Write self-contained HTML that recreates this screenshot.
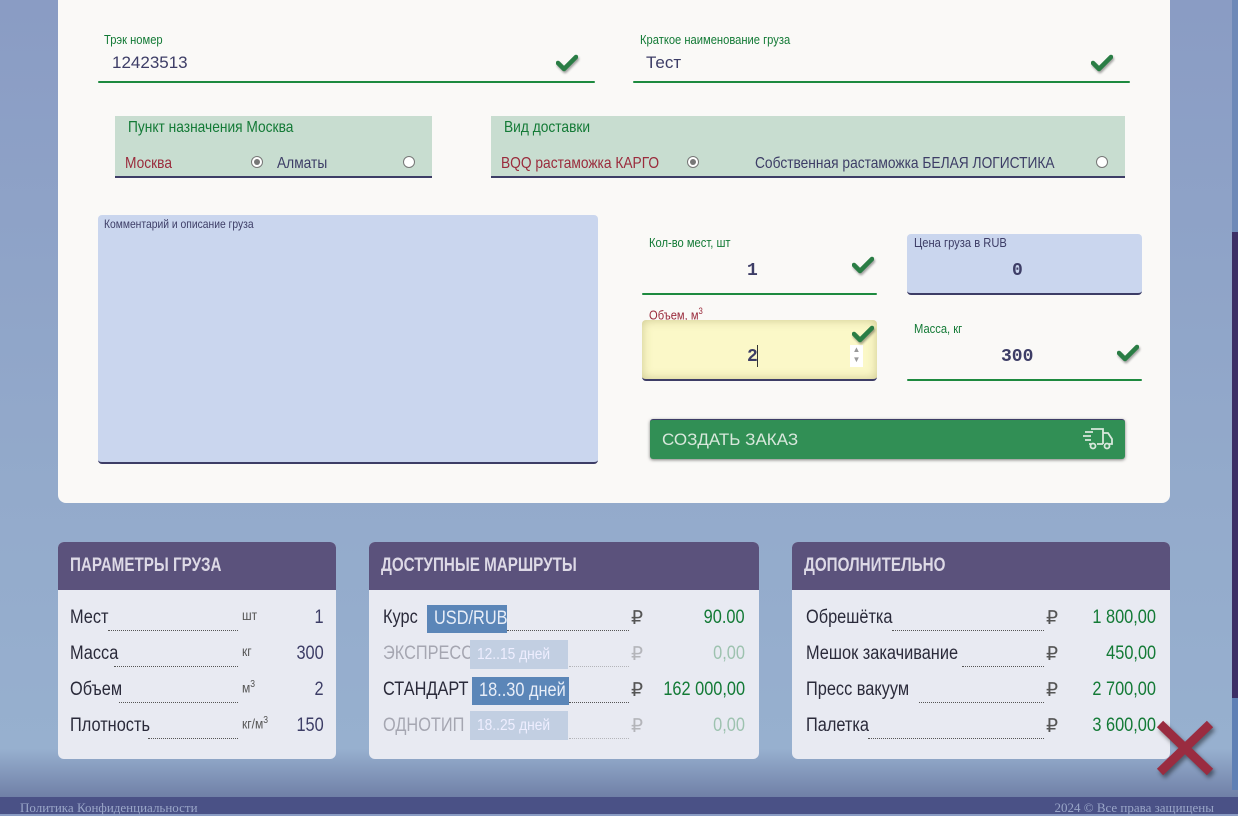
<!DOCTYPE html>
<html><head><meta charset="utf-8"><style>
*{margin:0;padding:0;box-sizing:border-box}
body{width:1238px;height:814px;overflow:hidden;position:relative;background:linear-gradient(180deg,#8a9cc4 0%,#93aacb 60%,#97b0cf 92%,#6f7fa6 98%);font-family:"Liberation Sans",sans-serif}
.a{position:absolute}
.n{transform:scaleX(.86);transform-origin:left center}
.nr{transform:scaleX(.86);transform-origin:right center}
.card{left:58px;top:0;width:1112px;height:503px;background:#faf9f7;border-radius:0 0 8px 8px}
.lbl{font-size:13px;color:#137a36;white-space:nowrap}
.ul{height:2px;background:#1d8a3f;border-radius:2px}
.chk{width:22px;height:18px}
.val{font-family:"Liberation Sans",sans-serif;font-size:17px;color:#3d3d66}
.mono{font-family:"Liberation Mono",monospace;font-weight:bold;font-size:18px;color:#3d3d66}
.gbox{background:#c8ddd0;border-bottom:2px solid #3d3d66}
.radio{width:12px;height:12px;border-radius:50%;background:#fff;border:1px solid #777}
.radio.on::after{content:"";position:absolute;left:2px;top:2px;width:6px;height:6px;border-radius:50%;background:#777}
.t16{font-size:16px;white-space:nowrap}
.bc{top:542px;height:217px;background:#e8eaf2;border-radius:6px;overflow:hidden}
.bh{height:48px;background:#5b527c;color:#ddd9e6;font-weight:bold;font-size:19px;padding:13px 12px;white-space:nowrap}
.bh span{display:inline-block;transform:scaleX(.8);transform-origin:left}
.row{position:absolute;left:0;right:0;height:30px;font-size:19px;color:#2a2a3a;white-space:nowrap}
.row>span{top:2px}
.dots{position:absolute;border-bottom:1px dotted #555;height:1px}
.g{color:#137a36}
.faded{opacity:.35}
.tag{position:absolute;background:#5b86b8;color:#e8eef8;padding:0 7px;height:28px;line-height:28px;white-space:nowrap}
.tag.f{background:#c2cfe2;color:#eef;}
.tag i{font-style:normal;display:inline-block;transform:scaleX(.86);transform-origin:left}
</style></head><body>
<div class="a card"></div>
<div class="a" style="left:1232px;top:0;width:6px;height:232px;background:#6e89b8"></div>
<div class="a" style="left:1232px;top:232px;width:6px;height:466px;background:#3c2f66"></div>
<div class="a" style="left:1232px;top:698px;width:6px;height:92px;background:#5f80b5"></div>

<svg width="0" height="0" style="position:absolute"><defs><symbol id="ck" viewBox="0 0 22 18"><path d="M2 9 L8 15 L20 3" stroke="#2a7d45" stroke-width="4.5" fill="none" stroke-linecap="round" stroke-linejoin="round"/></symbol></defs></svg>

<div class="a lbl n" style="left:104px;top:32px">Трэк номер</div>
<div class="a val" style="left:112px;top:53px">12423513</div>
<svg class="a chk" style="left:556px;top:54px;filter:drop-shadow(1px 2px 1px rgba(0,0,0,.35))"><use href="#ck"/></svg>
<div class="a ul" style="left:98px;top:81px;width:497px"></div>

<div class="a lbl n" style="left:640px;top:32px">Краткое наименование груза</div>
<div class="a val" style="left:646px;top:53px">Тест</div>
<svg class="a chk" style="left:1091px;top:54px;filter:drop-shadow(1px 2px 1px rgba(0,0,0,.35))"><use href="#ck"/></svg>
<div class="a ul" style="left:633px;top:81px;width:497px"></div>

<div class="a gbox" style="left:115px;top:116px;width:317px;height:62px"></div>
<div class="a t16 n" style="left:128px;top:119px;color:#137a36">Пункт назначения Москва</div>
<div class="a t16 n" style="left:125px;top:155px;color:#9a2b3c">Москва</div>
<div class="a radio on" style="left:251px;top:156px"></div>
<div class="a t16 n" style="left:277px;top:155px;color:#3d3d66">Алматы</div>
<div class="a radio" style="left:403px;top:156px"></div>

<div class="a gbox" style="left:491px;top:116px;width:634px;height:62px"></div>
<div class="a t16 n" style="left:504px;top:119px;color:#137a36">Вид доставки</div>
<div class="a t16 n" style="left:501px;top:155px;color:#9a2b3c">BQQ растаможка КАРГО</div>
<div class="a radio on" style="left:687px;top:156px"></div>
<div class="a t16 n" style="left:755px;top:155px;color:#3d3d66">Собственная растаможка БЕЛАЯ ЛОГИСТИКА</div>
<div class="a radio" style="left:1096px;top:156px"></div>

<div class="a" style="left:98px;top:215px;width:500px;height:249px;background:#cad6ee;border-radius:4px;border-bottom:2px solid #3d3d66"></div>
<div class="a n" style="left:104px;top:217px;font-size:12px;color:#3d3d66;white-space:nowrap">Комментарий и описание груза</div>

<div class="a lbl n" style="left:649px;top:235px">Кол-во мест, шт</div>
<div class="a mono" style="left:747px;top:261px">1</div>
<svg class="a chk" style="left:852px;top:256px;filter:drop-shadow(1px 2px 1px rgba(0,0,0,.35))"><use href="#ck"/></svg>
<div class="a ul" style="left:642px;top:293px;width:235px"></div>

<div class="a" style="left:907px;top:234px;width:235px;height:61px;background:#cad6ee;border-radius:4px;border-bottom:2px solid #3d3d66"></div>
<div class="a n" style="left:914px;top:235px;font-size:13px;color:#3d3d66;white-space:nowrap">Цена груза в RUB</div>
<div class="a mono" style="left:1012px;top:261px">0</div>

<div class="a n" style="left:649px;top:306px;font-size:13px;color:#9a2b3c;white-space:nowrap">Объем, м<sup style="font-size:9px">3</sup></div>
<div class="a" style="left:642px;top:320px;width:235px;height:61px;background:#fbf8c8;border-radius:4px;border-bottom:2px solid #3d3d66;box-shadow:inset 0 0 10px rgba(120,110,40,.35)"></div>
<div class="a mono" style="left:747px;top:347px">2</div>
<div class="a" style="left:757px;top:345px;width:1px;height:22px;background:#333"></div>
<div class="a" style="left:850px;top:345px;width:13px;height:22px;background:#fff;font-size:8px;color:#999;text-align:center;line-height:10px">▲<br>▼</div>
<svg class="a chk" style="left:852px;top:325px;filter:drop-shadow(1px 2px 1px rgba(0,0,0,.35))"><use href="#ck"/></svg>

<div class="a lbl n" style="left:914px;top:321px">Масса, кг</div>
<div class="a mono" style="left:1001px;top:347px">300</div>
<svg class="a chk" style="left:1117px;top:344px;filter:drop-shadow(1px 2px 1px rgba(0,0,0,.35))"><use href="#ck"/></svg>
<div class="a ul" style="left:907px;top:379px;width:235px"></div>

<div class="a" style="left:650px;top:419px;width:475px;height:40px;background:#318f55;border-radius:3px;box-shadow:0 1px 3px rgba(0,0,0,.5);border-top:1px solid #3d3d66"></div>
<div class="a" style="left:662px;top:430px;font-size:17px;color:#d8e8dc">СОЗДАТЬ ЗАКАЗ</div>
<svg class="a" style="left:1082px;top:426px" width="32" height="26" viewBox="0 0 32 26" fill="none" stroke="#d8e8dc" stroke-width="1.8"><path d="M9 3h12v15M21 7h5l4 6v5h-3M21 18h-6M9 18h-2"/><path d="M3 6h8M1 10h8M3 14h6"/><circle cx="11" cy="20" r="2.5"/><circle cx="25" cy="20" r="2.5"/></svg>

<div class="a bc" style="left:58px;width:278px">
<div class="bh"><span>ПАРАМЕТРЫ ГРУЗА</span></div>
<div class="row" style="top:63px"><span class="a n" style="left:12px">Мест</span><div class="dots" style="left:50px;width:130px;top:25px"></div><span class="a n" style="left:184px;font-size:14px;color:#555">шт</span><span class="a nr" style="right:12px;color:#3d3d66">1</span></div>
<div class="row" style="top:99px"><span class="a n" style="left:12px">Масса</span><div class="dots" style="left:56px;width:124px;top:25px"></div><span class="a n" style="left:184px;font-size:14px;color:#555">кг</span><span class="a nr" style="right:12px;color:#3d3d66">300</span></div>
<div class="row" style="top:135px"><span class="a n" style="left:12px">Объем</span><div class="dots" style="left:61px;width:119px;top:25px"></div><span class="a n" style="left:184px;font-size:14px;color:#555">м<sup style="font-size:10px">3</sup></span><span class="a nr" style="right:12px;color:#3d3d66">2</span></div>
<div class="row" style="top:171px"><span class="a n" style="left:12px">Плотность</span><div class="dots" style="left:90px;width:90px;top:25px"></div><span class="a n" style="left:184px;font-size:14px;color:#555">кг/м<sup style="font-size:10px">3</sup></span><span class="a nr" style="right:12px;color:#3d3d66">150</span></div>
</div>

<div class="a bc" style="left:369px;width:390px">
<div class="bh"><span>ДОСТУПНЫЕ МАРШРУТЫ</span></div>
<div class="row" style="top:63px"><span class="a n" style="left:14px">Курс</span><span class="tag" style="left:58px;top:0;width:80px"><i>USD/RUB</i></span><div class="dots" style="left:138px;width:122px;top:25px"></div><span class="a" style="left:262px;color:#555">₽</span><span class="a g nr" style="right:14px">90.00</span></div>
<div class="row faded" style="top:99px"><span class="a n" style="left:14px">ЭКСПРЕСС</span><div class="dots" style="left:200px;width:60px;top:25px"></div><span class="a" style="left:262px;color:#555">₽</span><span class="a g nr" style="right:14px">0,00</span></div>
<span class="a tag f" style="left:101px;top:98px;height:29px;line-height:29px;width:98px"><i>12..15 дней</i></span>
<div class="row" style="top:135px"><span class="a n" style="left:14px">СТАНДАРТ</span><span class="tag" style="left:103px;top:0;width:97px"><i>18..30 дней</i></span><div class="dots" style="left:200px;width:60px;top:25px"></div><span class="a" style="left:262px;color:#555">₽</span><span class="a g nr" style="right:14px">162 000,00</span></div>
<div class="row faded" style="top:171px"><span class="a n" style="left:14px">ОДНОТИП</span><div class="dots" style="left:200px;width:60px;top:25px"></div><span class="a" style="left:262px;color:#555">₽</span><span class="a g nr" style="right:14px">0,00</span></div>
<span class="a tag f" style="left:101px;top:169px;height:29px;line-height:29px;width:98px"><i>18..25 дней</i></span>
</div>

<div class="a bc" style="left:792px;width:378px">
<div class="bh"><span>ДОПОЛНИТЕЛЬНО</span></div>
<div class="row" style="top:63px"><span class="a n" style="left:14px">Обрешётка</span><div class="dots" style="left:100px;width:152px;top:25px"></div><span class="a" style="left:254px;color:#555">₽</span><span class="a g nr" style="right:14px">1 800,00</span></div>
<div class="row" style="top:99px"><span class="a n" style="left:14px">Мешок закачивание</span><div class="dots" style="left:170px;width:82px;top:25px"></div><span class="a" style="left:254px;color:#555">₽</span><span class="a g nr" style="right:14px">450,00</span></div>
<div class="row" style="top:135px"><span class="a n" style="left:14px">Пресс вакуум</span><div class="dots" style="left:127px;width:125px;top:25px"></div><span class="a" style="left:254px;color:#555">₽</span><span class="a g nr" style="right:14px">2 700,00</span></div>
<div class="row" style="top:171px"><span class="a n" style="left:14px">Палетка</span><div class="dots" style="left:76px;width:176px;top:25px"></div><span class="a" style="left:254px;color:#555">₽</span><span class="a g nr" style="right:14px">3 600,00</span></div>
</div>

<svg class="a" style="left:1154px;top:718px;filter:drop-shadow(2px 3px 2px rgba(0,0,0,.45))" width="62" height="60" viewBox="0 0 62 60"><path d="M6 6 L56 54 M56 6 L6 54" stroke="#9a2c40" stroke-width="9"/></svg>

<div class="a" style="left:0;top:797px;width:1238px;height:17px;background:#4a5186"></div>
<div class="a" style="left:20px;top:800px;font-family:'Liberation Serif',serif;font-size:13px;color:#9aa6c8">Политика Конфиденциальности</div>
<div class="a" style="right:24px;top:800px;font-family:'Liberation Serif',serif;font-size:13px;color:#9aa6c8">2024 © Все права защищены</div>
</body></html>
